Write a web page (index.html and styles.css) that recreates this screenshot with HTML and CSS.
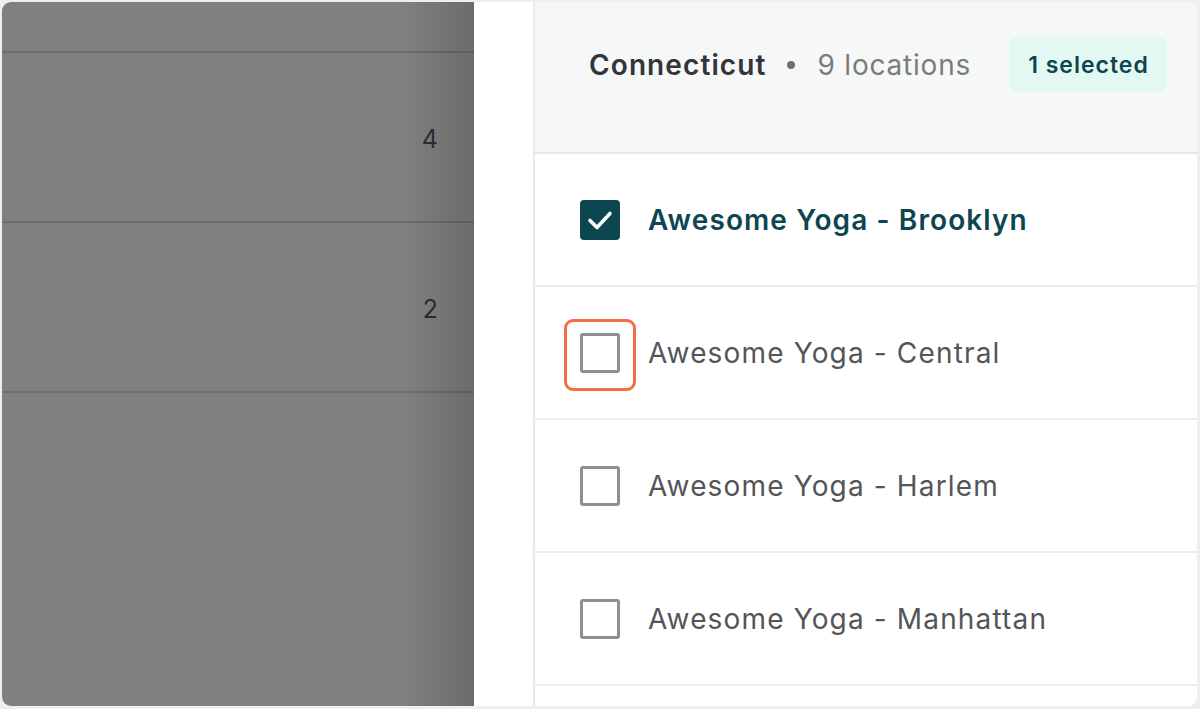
FILE: index.html
```html
<!DOCTYPE html>
<html>
<head>
<meta charset="utf-8">
<link rel="stylesheet" href="styles.css">
</head>
<body>
<div class="frame">
  <div class="backdrop">
    <div class="bd-row bd-top"></div>
    <div class="bd-row"><span class="num">4</span></div>
    <div class="bd-row"><span class="num">2</span></div>
    <div class="bd-rest"></div>
  </div>
  <div class="drawer">
    <div class="list">
      <div class="list-head">
        <span class="state">Connecticut</span>
        <span class="dot"></span>
        <span class="count">9 locations</span>
        <span class="badge">1 selected</span>
      </div>
      <div class="item checked">
        <span class="box">
          <svg viewBox="0 0 40 40" width="40" height="40"><path d="M10 20.5l7 7 13-14" fill="none" stroke="#fff" stroke-width="3.6" stroke-linecap="round" stroke-linejoin="round"/></svg>
        </span>
        <span class="label">Awesome Yoga - Brooklyn</span>
      </div>
      <div class="item">
        <span class="focus"><span class="box"></span></span>
        <span class="label">Awesome Yoga - Central</span>
      </div>
      <div class="item">
        <span class="box"></span>
        <span class="label">Awesome Yoga - Harlem</span>
      </div>
      <div class="item">
        <span class="box"></span>
        <span class="label">Awesome Yoga - Manhattan</span>
      </div>
      <div class="item"></div>
    </div>
  </div>
</div>
</body>
</html>
```
FILE: styles.css
```css
html, body {
  margin: 0;
  padding: 0;
  background: #efeff3;
}
body {
  font-family: Inter, "Noto Sans", sans-serif;
  width: 1200px;
  height: 709px;
  overflow: hidden;
}
.frame {
  margin: 2px 3px 3px 2px;
  height: 704px;
  border-radius: 9px;
  overflow: hidden;
  display: flex;
  background: #fff;
}
.backdrop {
  width: 472px;
  flex: none;
  display: flex;
  flex-direction: column;
  background: linear-gradient(to right, #808080 0, #808080 400px, #6c6c6c 472px);
}
.bd-row {
  height: 168px;
  border-bottom: 2px solid rgba(0,0,0,0.14);
  display: flex;
  align-items: center;
  justify-content: flex-end;
  padding-right: 36px;
}
.bd-top {
  height: 49px;
}
.bd-rest { flex: 1; }
.num {
  font-size: 25px;
  color: #2b2b30;
  margin-top: 4px;
}
.drawer {
  flex: 1;
  padding-left: 59px;
  display: flex;
}
.list {
  flex: 1;
  border-left: 2px solid #e8e9ea;
  display: flex;
  flex-direction: column;
}
.list-head {
  height: 152px;
  flex: none;
  box-sizing: border-box;
  background: #f6f8f8;
  border-bottom: 2px solid #e6e8e8;
  display: flex;
  align-items: center;
  align-self: stretch;
  padding: 35px 0 60px 54px;
}
.state {
  font-size: 28px;
  font-weight: 600;
  color: #333538;
  letter-spacing: 1.1px;
}
.dot {
  width: 8px;
  height: 8px;
  border-radius: 50%;
  background: #6f7073;
  margin: 0 22px 0 21px;
}
.count {
  font-size: 28px;
  color: #7a7b7e;
  letter-spacing: 0.8px;
}
.badge {
  margin-left: 38px;
  background: #e4f8f3;
  border-radius: 8px;
  height: 55px;
  padding: 0 18px 0 19px;
  display: flex;
  align-items: center;
  font-size: 23px;
  font-weight: 600;
  color: #0d4650;
  letter-spacing: 1px;
}
.item {
  height: 131px;
  flex: none;
  border-bottom: 2px solid #ebecec;
  display: flex;
  align-items: center;
  padding-left: 45px;
}
.box {
  width: 40px;
  height: 40px;
  box-sizing: border-box;
  border: 3px solid #8f8f92;
  border-radius: 3px;
  flex: none;
  display: block;
}
.checked .box {
  background: #0c4650;
  border-color: #0c4650;
  border-width: 0;
  border-radius: 4px;
}
.checked .box svg { display: block; }
.focus {
  margin: -14px -16px -18px -16px;
  padding: 11px 13px 15px 13px;
  border: 3px solid #f2703f;
  border-radius: 9px;
  display: block;
}
.label {
  margin-left: 28px;
  font-size: 28px;
  color: #545558;
  letter-spacing: 1.15px;
}
.checked .label {
  color: #0d4650;
  font-weight: 600;
  letter-spacing: 1.1px;
}
```
